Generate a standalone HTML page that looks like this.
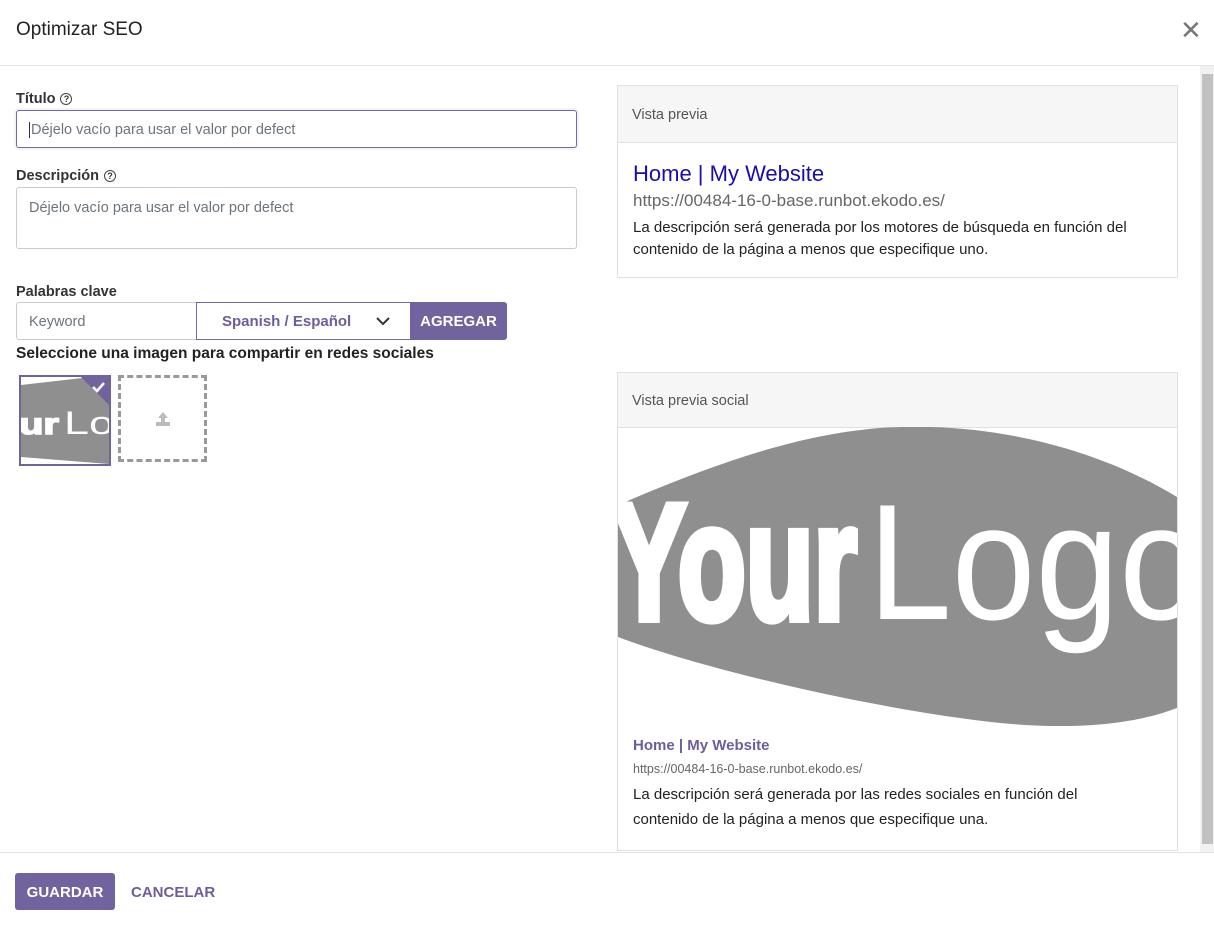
<!DOCTYPE html>
<html><head><meta charset="utf-8"><style>
*{box-sizing:border-box;margin:0;padding:0}
body{width:1214px;height:926px;background:#fff;font-family:"Liberation Sans",Arial,sans-serif;color:#212529;position:relative;overflow:hidden;font-size:14px}
.a{position:absolute}
.lbl{font-size:14.5px;font-weight:bold;color:#333}
.q{display:inline-block;width:12px;height:12px;border:1.3px solid #444;border-radius:50%;font-size:9px;text-align:center;line-height:10px;font-weight:bold;vertical-align:1px;margin-left:5px}
.inp{border:1px solid #ccc;border-radius:3px;color:#6c757d;font-size:14.5px;padding-left:12px}
.card{border:1px solid #dee2e6}
.ch{background:#f6f6f6;border-bottom:1px solid #dee2e6;color:#555;font-size:14.5px;padding-left:14px}
</style></head><body>
<div class="a" style="left:16px;top:19px;font-size:19px;color:#222">Optimizar SEO</div>
<div class="a" style="left:1180px;top:18px;font-size:26px;color:#777;line-height:24px">&#x2715;</div>
<div class="a" style="left:0;top:65px;width:1214px;border-top:1px solid #e3e3e3"></div>

<div class="a lbl" style="left:16px;top:91px">Título<span class="q">?</span></div>
<div class="a inp" style="left:16px;top:110px;width:561px;height:38px;border-color:#7468a8;line-height:38px;box-shadow:0 0 0 2px #f3f2f9"><span style="border-left:1px solid #333;padding-left:1px">Déjelo vacío para usar el valor por defect</span></div>
<div class="a lbl" style="left:16px;top:168px">Descripción<span class="q">?</span></div>
<div class="a inp" style="left:16px;top:187px;width:561px;height:62px;padding-top:12px">Déjelo vacío para usar el valor por defect</div>

<div class="a lbl" style="left:16px;top:284px">Palabras clave</div>
<div class="a inp" style="left:16px;top:302px;width:181px;height:38px;line-height:38px;border-radius:3px 0 0 3px">Keyword</div>
<div class="a" style="left:196px;top:302px;width:215px;height:38px;border:1px solid #7468a8;color:#6e5d9c;font-weight:bold;font-size:15px;line-height:38px;padding-left:25px">Spanish / Español<svg style="position:absolute;left:179px;top:14px" width="14" height="9" viewBox="0 0 14 9"><path d="M1 1l6 6 6-6" fill="none" stroke="#333" stroke-width="2"/></svg></div>
<div class="a" style="left:410px;top:302px;width:97px;height:38px;background:#71639e;color:#fff;font-weight:bold;font-size:15px;line-height:40px;text-align:center;border-radius:0 3px 3px 0">AGREGAR</div>
<div class="a lbl" style="left:16px;top:345px;color:#222;font-size:15.5px">Seleccione una imagen para compartir en redes sociales</div>

<div class="a" style="left:19px;top:375px;width:92px;height:91px;border:2px solid #71639e;overflow:hidden;background:#fff">
<svg width="88" height="87" viewBox="0 0 88 87"><path d="M0 8 L70 0 L88 0 L88 87 L0 80Z" fill="#8f8f8f"/><path d="M60 0 L88 0 L88 28Z" fill="#71639e"/><path d="M72 10l4 4 7-8" stroke="#fff" stroke-width="2.5" fill="none"/><text x="-2" y="57" font-size="30" font-weight="900" fill="#fff" stroke="#fff" stroke-width="1.5" font-family="Liberation Sans" textLength="40" lengthAdjust="spacingAndGlyphs">ur</text><text x="43" y="57" font-size="32" fill="#fff" font-family="Liberation Sans" textLength="50" lengthAdjust="spacingAndGlyphs">Lo</text></svg></div>
<div class="a" style="left:118px;top:375px;width:89px;height:87px;border:3px dashed #999"><svg style="position:absolute;left:34px;top:34px" width="16" height="14" viewBox="0 0 16 14"><path d="M8 0L3 6h3v4h4V6h3z M1 10h14v4H1z" fill="#bbb"/></svg></div>

<div class="a card" style="left:617px;top:85px;width:561px;height:193px">
<div class="ch" style="height:57px;line-height:58px">Vista previa</div>
<div style="padding:18px 15px 0">
<div style="color:#1a0dab;font-size:22px">Home | My Website</div>
<div style="color:#666;font-size:17px;margin-top:4px">https://00484-16-0-base.runbot.ekodo.es/</div>
<div style="color:#222;font-size:15px;line-height:22px;margin-top:6px;width:520px">La descripción será generada por los motores de búsqueda en función del contenido de la página a menos que especifique uno.</div>
</div></div>

<div class="a card" style="left:617px;top:372px;width:561px;height:479px;overflow:hidden">
<div class="ch" style="height:55px;line-height:57px">Vista previa social</div>
<svg class="a" style="left:0;top:54px" width="560" height="305" viewBox="618 427 560 305"><path d="M618 505 C700 470 800 430 900 427 C1000 424 1100 450 1177 497 L1177 708 C1120 730 1040 730 960 718 C850 703 700 668 618 637 Z" fill="#8f8f8f"/>
<text x="612" y="619" font-size="165" font-weight="900" fill="#fff" stroke="#fff" stroke-width="8" font-family="Liberation Sans" textLength="245" lengthAdjust="spacingAndGlyphs">Your</text>
<text x="868" y="619" font-size="165" fill="#fff" font-family="Liberation Sans" textLength="335" lengthAdjust="spacingAndGlyphs">Logo</text></svg>
<div class="a" style="left:15px;top:364px;color:#6e5d9c;font-weight:bold;font-size:15px">Home | My Website</div>
<div class="a" style="left:15px;top:389px;color:#666;font-size:12.5px">https://00484-16-0-base.runbot.ekodo.es/</div>
<div class="a" style="left:15px;top:409px;width:480px;color:#222;font-size:15px;line-height:25px">La descripción será generada por las redes sociales en función del contenido de la página a menos que especifique una.</div>
</div>

<div class="a" style="left:1200px;top:66px;width:14px;height:786px;background:#f1f1f1"><div style="position:absolute;left:2px;top:8px;width:11px;height:770px;background:#c1c1c1"></div></div>

<div class="a" style="left:0;top:852px;width:1214px;border-top:1px solid #e3e3e3"></div>
<div class="a" style="left:15px;top:873px;width:100px;height:37px;background:#71639e;color:#fff;font-weight:bold;font-size:15px;line-height:39px;text-align:center;border-radius:3px">GUARDAR</div>
<div class="a" style="left:131px;top:873px;color:#6e5d9c;font-weight:bold;font-size:15px;line-height:39px">CANCELAR</div>
</body></html>
